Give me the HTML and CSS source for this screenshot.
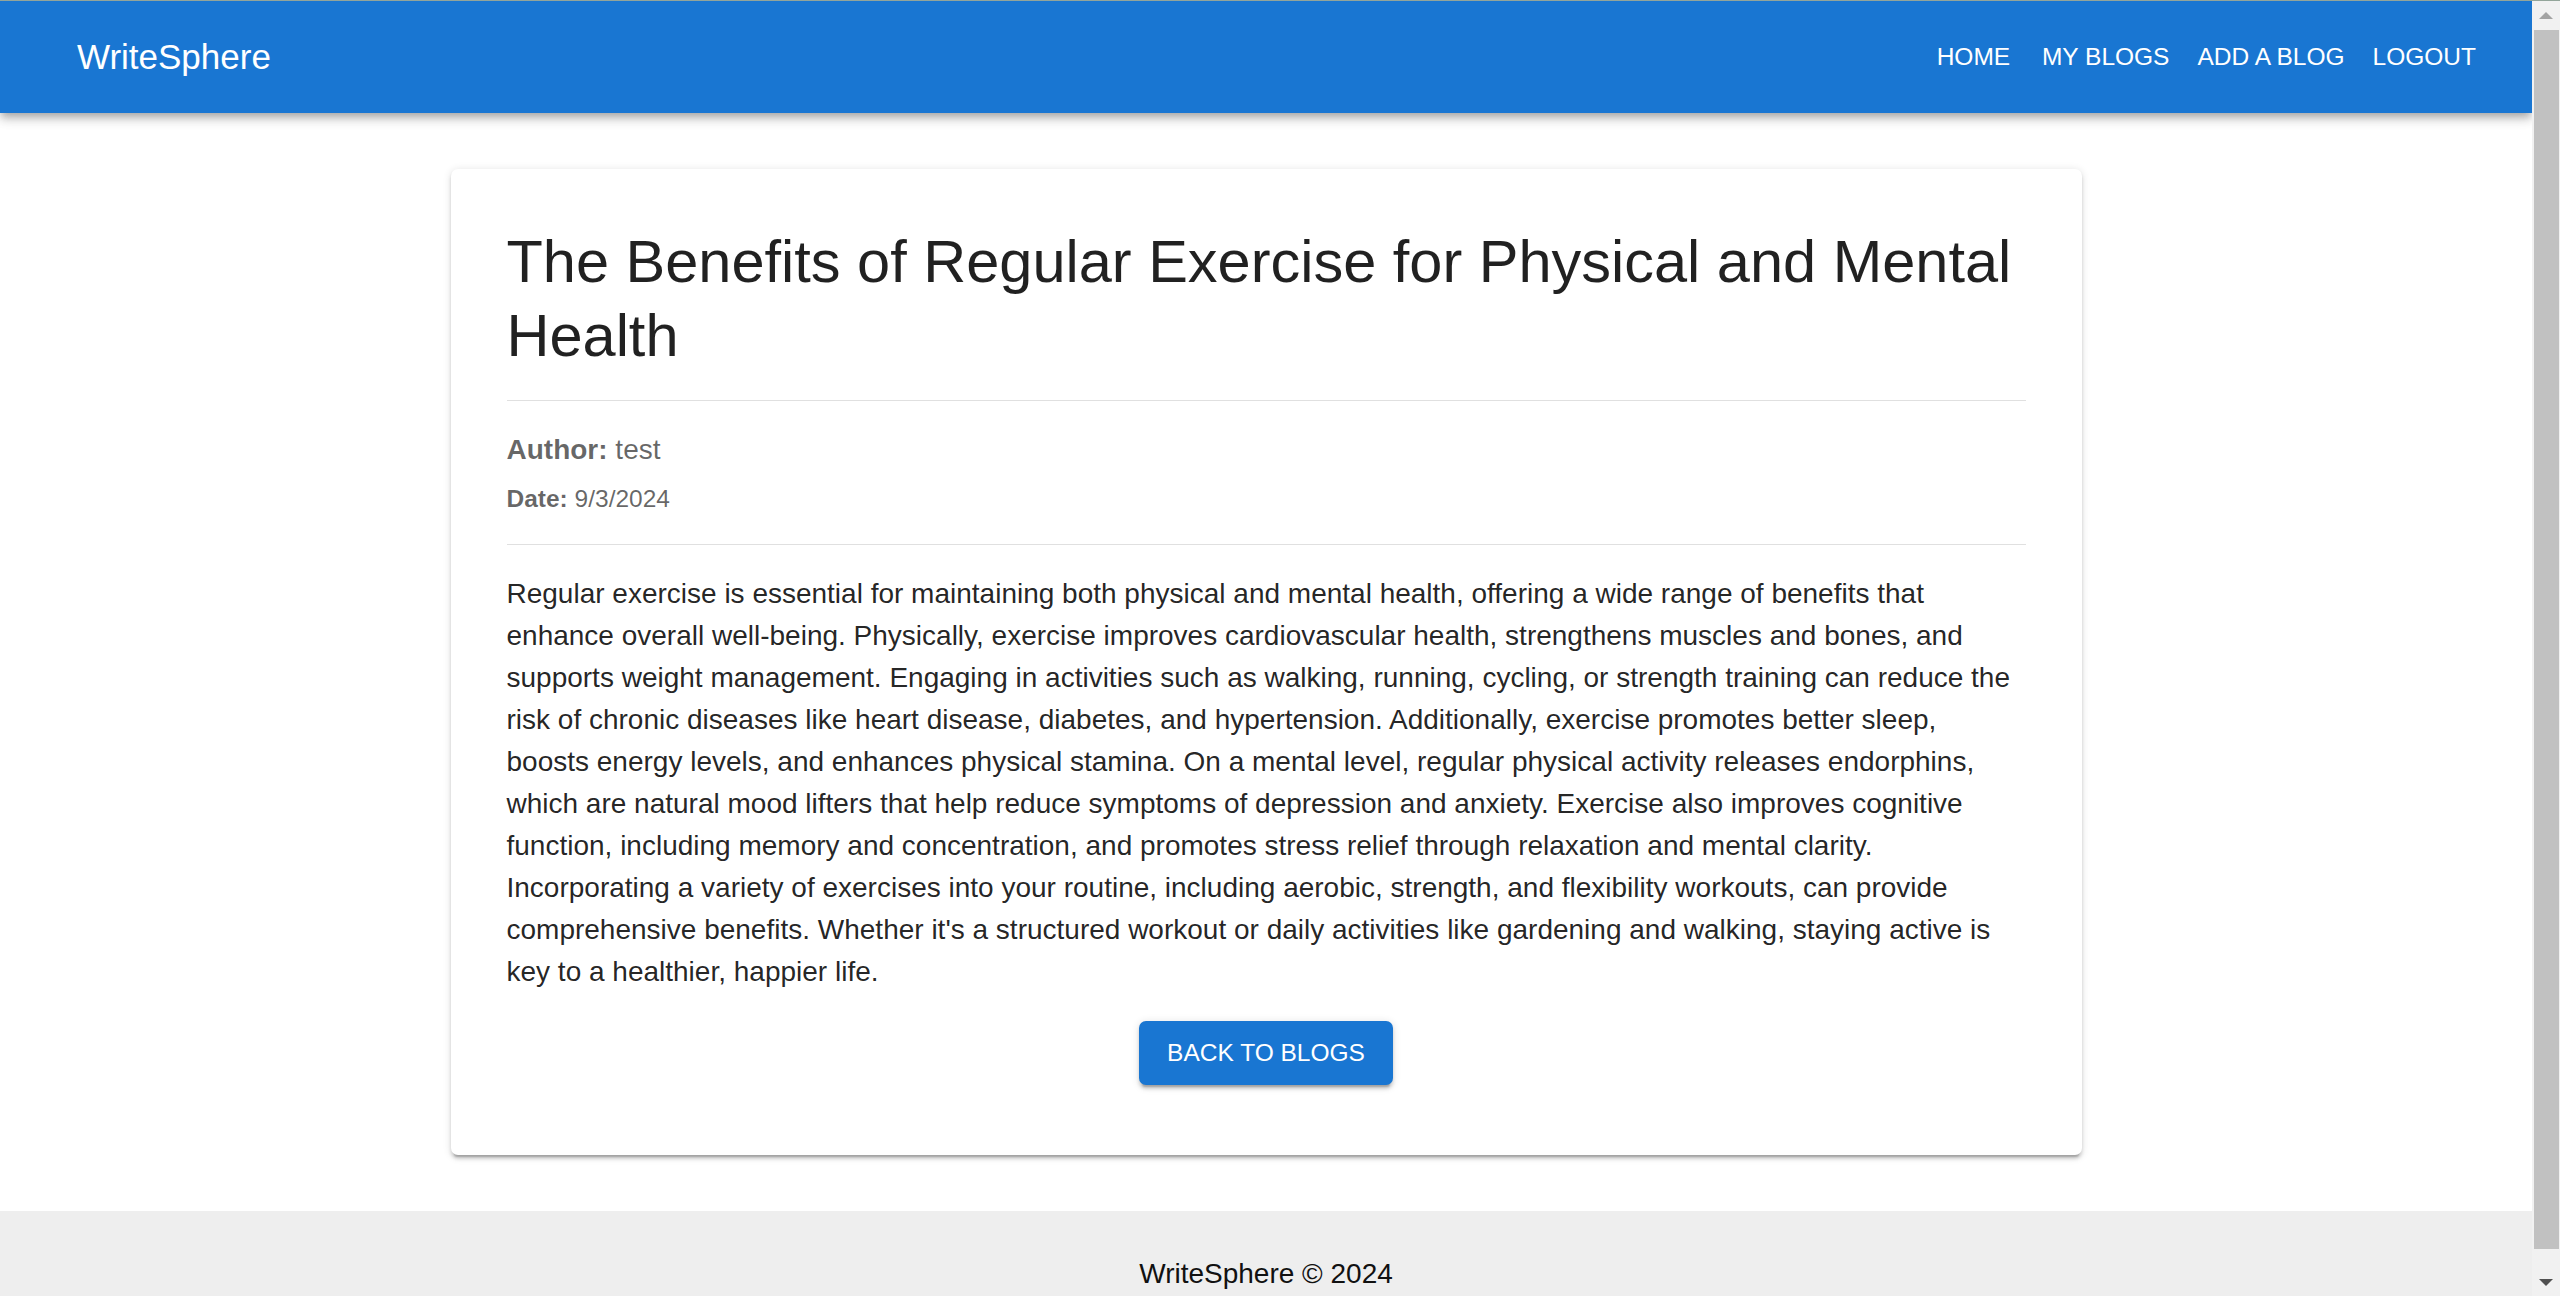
FILE: index.html
```html
<!DOCTYPE html>
<html lang="en">
<head>
<meta charset="utf-8">
<title>WriteSphere</title>
<link rel="stylesheet" href="styles.css">
</head>
<body>
<div class="topline"></div>
<div class="window">
  <div class="viewport">
    <header class="appbar">
      <div class="brand">WriteSphere</div>
      <nav class="nav">
        <a class="nav-btn nav-home">Home</a>
        <a class="nav-btn">My Blogs</a>
        <a class="nav-btn">Add a Blog</a>
        <a class="nav-btn">Logout</a>
      </nav>
    </header>
    <main class="main">
      <article class="card">
        <h1 class="title">The Benefits of Regular Exercise for Physical and Mental Health</h1>
        <hr class="divider">
        <p class="author"><strong>Author:</strong> test</p>
        <p class="date"><strong>Date:</strong> 9/3/2024</p>
        <hr class="divider">
        <p class="content">Regular exercise is essential for maintaining both physical and mental health, offering a wide range of benefits that enhance overall well-being. Physically, exercise improves cardiovascular health, strengthens muscles and bones, and supports weight management. Engaging in activities such as walking, running, cycling, or strength training can reduce the risk of chronic diseases like heart disease, diabetes, and hypertension. Additionally, exercise promotes better sleep, boosts energy levels, and enhances physical stamina. On a mental level, regular physical activity releases endorphins, which are natural mood lifters that help reduce symptoms of depression and anxiety. Exercise also improves cognitive function, including memory and concentration, and promotes stress relief through relaxation and mental clarity. Incorporating a variety of exercises into your routine, including aerobic, strength, and flexibility workouts, can provide comprehensive benefits. Whether it's a structured workout or daily activities like gardening and walking, staying active is key to a healthier, happier life.</p>
        <div class="actions">
          <button class="back-btn" type="button">Back to Blogs</button>
        </div>
      </article>
    </main>
    <footer class="footer">
      <p class="footer-text">WriteSphere © 2024</p>
    </footer>
  </div>
  <div class="scrollbar">
    <div class="sb-btn"><span class="arrow-up"></span></div>
    <div class="sb-track"><div class="sb-thumb"></div></div>
    <div class="sb-btn"><span class="arrow-down"></span></div>
  </div>
</div>
</body>
</html>
```
FILE: styles.css
```css
html, body {
  margin: 0;
  padding: 0;
  height: 1296px;
  overflow: hidden;
  background: #ffffff;
  font-family: "Liberation Sans", Arial, sans-serif;
}

.topline {
  height: 1px;
  background: #93a59a;
}

.window {
  display: flex;
  height: 1295px;
}

.viewport {
  flex: 1;
  min-width: 0;
  overflow: hidden;
  background: #ffffff;
}

/* App bar */
.appbar {
  position: relative;
  z-index: 2;
  height: 112px;
  box-sizing: border-box;
  padding: 0 42px 0 77px;
  display: flex;
  align-items: center;
  background: #1976d2;
  color: #ffffff;
  box-shadow: 0 3.5px 7px -1.75px rgba(0,0,0,0.2), 0 7px 8.75px 0 rgba(0,0,0,0.14), 0 1.75px 17.5px 0 rgba(0,0,0,0.12);
}

.brand {
  flex: 1;
  font-size: 35px;
  line-height: 1.6;
  font-weight: 500;
}

.nav {
  display: flex;
  align-items: center;
}

.nav-btn {
  display: inline-flex;
  justify-content: center;
  min-width: 109px;
  box-sizing: border-box;
  padding: 10.5px 14px;
  font-size: 24.5px;
  line-height: 1.75;
  font-weight: 500;
  text-transform: uppercase;
  color: #ffffff;
  cursor: pointer;
}

/* Main card */
.main {
  padding: 56px 0;
}

.card {
  width: 1631px;
  box-sizing: border-box;
  margin: 0 auto;
  padding: 56px;
  background: #ffffff;
  border-radius: 7px;
  box-shadow: 0 5.25px 1.75px -3.5px rgba(0,0,0,0.2), 0 3.5px 3.5px 0 rgba(0,0,0,0.14), 0 1.75px 8.75px 0 rgba(0,0,0,0.12);
}

.title {
  margin: 0 0 28px;
  font-size: 59.5px;
  line-height: 73.5px;
  font-weight: 400;
  color: rgba(0,0,0,0.87);
}

.divider {
  margin: 0;
  border: 0;
  height: 1px;
  background: rgba(0,0,0,0.12);
}

.author {
  margin: 28px 0 10px;
  font-size: 28px;
  line-height: 42px;
  color: rgba(0,0,0,0.6);
}

.date {
  margin: 0 0 28px;
  font-size: 24.5px;
  line-height: 35px;
  color: rgba(0,0,0,0.6);
}

.content {
  margin: 28px 0 0;
  font-size: 28px;
  line-height: 42px;
  color: rgba(0,0,0,0.87);
}

.actions {
  display: flex;
  justify-content: center;
  margin: 28px 0 14px;
}

.back-btn {
  height: 64px;
  padding: 0 28px;
  border: 0;
  border-radius: 7px;
  background: #1976d2;
  color: #ffffff;
  font-family: "Liberation Sans", Arial, sans-serif;
  font-size: 24.5px;
  font-weight: 500;
  text-transform: uppercase;
  box-shadow: 0 5.25px 1.75px -3.5px rgba(0,0,0,0.2), 0 3.5px 3.5px 0 rgba(0,0,0,0.14), 0 1.75px 8.75px 0 rgba(0,0,0,0.12);
  cursor: pointer;
}

/* Footer */
.footer {
  background: #eeeeee;
  padding: 42px;
  text-align: center;
}

.footer-text {
  margin: 0;
  font-size: 28px;
  line-height: 42px;
  color: #111111;
}

/* Fake browser scrollbar */
.scrollbar {
  width: 28px;
  display: flex;
  flex-direction: column;
  background: #f1f1f1;
}

.sb-btn {
  height: 28px;
  display: flex;
  align-items: center;
  justify-content: center;
}

.arrow-up {
  width: 0;
  height: 0;
  border-left: 7px solid transparent;
  border-right: 7px solid transparent;
  border-bottom: 7px solid #a3a3a3;
}

.arrow-down {
  width: 0;
  height: 0;
  border-left: 7px solid transparent;
  border-right: 7px solid transparent;
  border-top: 7px solid #505050;
}

.sb-track {
  flex: 1;
  padding: 1px 1px 0 2px;
}

.sb-thumb {
  height: 1219px;
  background: #c1c1c1;
}
```
